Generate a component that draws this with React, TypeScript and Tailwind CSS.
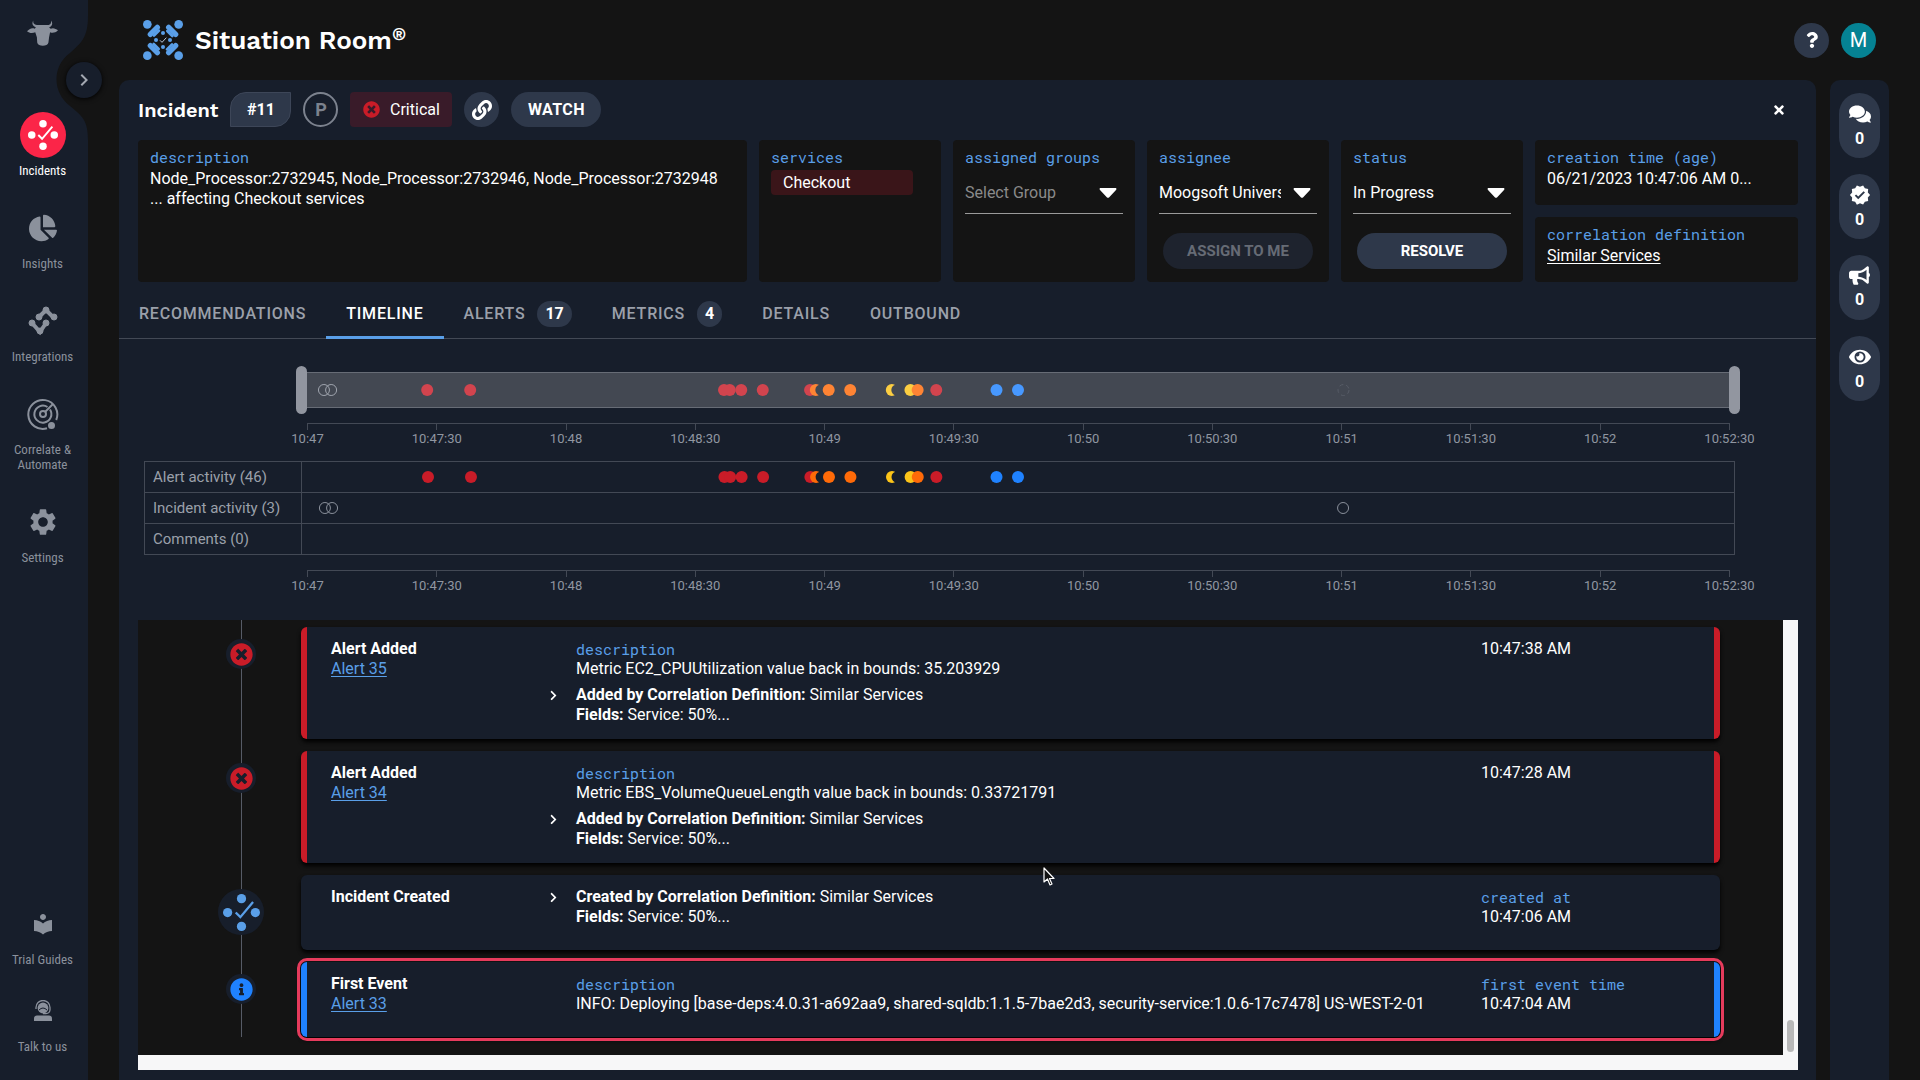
import type React from "react"
import {
  FaBullhorn,
  FaChartPie,
  FaChevronRight,
  FaComments,
  FaEye,
  FaInfoCircle,
  FaLink,
  FaQuestion,
  FaTimes,
  FaTimesCircle,
} from "react-icons/fa"
import { MdChevronRight, MdLocalLibrary, MdSettings, MdVerified } from "react-icons/md"

const CowLogo = () => (
  <svg viewBox="0 0 94 78" className="h-[26px] w-[31px] fill-[#8b919c]">
    <path d="M19 1C14 10 16 18 27 22L23 26C14 22 6 28 0 34C8 41 18 40 25 37L30 52L31 68C33 81 63 81 65 68L67 52L70 37C77 40 86 39 94 31C87 26 80 22 72 26L67 22C77 18 79 9 73 1C74 11 70 15 60 15L34 15C22 15 18 11 19 1Z" />
  </svg>
)

const RoomLogo = () => (
  <svg viewBox="0 0 120 120" className="size-10">
    {[0, 90, 180, 270].map((angle) => (
      <g key={angle} transform={`rotate(${angle} 60 60)`}>
        <circle cx="13" cy="13" r="13" fill="#5a9fe8" />
        <path d="M22 43L43 22" stroke="#5a9fe8" strokeWidth="16" strokeLinecap="round" />
        <path d="M33 47L48 32" stroke="#5a9fe8" strokeWidth="8" strokeLinecap="round" />
        <circle cx="60" cy="39" r="6" fill="#5a9fe8" />
      </g>
    ))}
    <path d="M51 61L57 67L70 53" fill="none" stroke="#b9c6da" strokeWidth="3" />
  </svg>
)

const CheckDots = ({ className }: { className: string }) => (
  <svg viewBox="0 0 32 32" className={className} fill="currentColor">
    <circle cx="16" cy="4" r="4" />
    <circle cx="4" cy="16" r="4" />
    <circle cx="28" cy="16" r="4" />
    <circle cx="16" cy="28" r="4" />
    <path d="M11 16L15 20L26 7" fill="none" stroke="currentColor" strokeWidth="2" />
  </svg>
)

const IntegrationsIcon = () => (
  <svg viewBox="0 0 32 32" className="size-8" fill="currentColor" stroke="currentColor">
    <path d="M5 18L13 27L19 18M12 12L19 5L26 12" fill="none" strokeWidth="4" />
    <circle cx="5" cy="18" r="3" />
    <circle cx="13" cy="26" r="3" />
    <circle cx="19" cy="18" r="3" />
    <circle cx="12" cy="12" r="3" />
    <circle cx="19" cy="5" r="3" />
    <circle cx="27" cy="12" r="3" />
  </svg>
)

const RadarIcon = () => (
  <svg viewBox="0 0 32 32" className="size-8" fill="none" stroke="currentColor" strokeWidth="2">
    <path d="M20 30.3A14.5 14.5 0 1 1 29.2 22" />
    <path d="M20.5 9A8.5 8.5 0 1 0 23 11.5" />
    <circle cx="16" cy="16" r="3" />
    <path d="M18 14L26 6" />
    <circle cx="24.500" cy="27.500" r="2.500" fill="currentColor" />
  </svg>
)

const AgentIcon = () => (
  <svg viewBox="0 0 20 22" className="h-[22px] w-5" fill="currentColor">
    <circle cx="10" cy="8" r="5.400" />
    <path d="M3 9V7.500A7 7 0 0 1 17 7.500V10A4 4 0 0 1 13 13.500H10" fill="none" stroke="currentColor" strokeWidth="1.300" />
    <path d="M6 10Q10 6 14 10" fill="none" stroke="#171e2b" strokeWidth="1" />
    <path d="M1 21V18.500Q1 15.500 4 15.500H16Q19 15.500 19 18.500V21Z" />
  </svg>
)

const NavItem = ({
  label,
  active,
  children,
}: { label: string; active?: boolean; children: React.ReactNode }) => (
  <a
    href="#"
    className={`flex w-[85px] flex-col items-center gap-1 text-center ${active ? "text-white" : "text-[#8b919c]"}`}
  >
    <span className="flex h-12 items-center">{children}</span>
    <span className="w-20 font-['Roboto_Condensed','Roboto',sans-serif] text-[13px] leading-[15px]">{label}</span>
  </a>
)

const FieldLabel = ({ children }: { children: React.ReactNode }) => (
  <div className="font-['Roboto_Mono','DejaVu_Sans_Mono',monospace] text-[15px] leading-5 text-[#5a9fe8]">
    {children}
  </div>
)

const Card = ({ label, children }: { label: string; children: React.ReactNode }) => (
  <div className="flex min-w-0 flex-1 flex-col gap-0.5 rounded bg-[#141414] px-3 pt-[7px]">
    <FieldLabel>{label}</FieldLabel>
    <div>{children}</div>
  </div>
)

const SelectField = ({ label, value, muted }: { label: string; value: string; muted?: boolean }) => (
  <div className="mt-[10px] flex h-[35px] items-center border-b border-[#9a9a9a] pr-[6px] pb-[6px]">
    <select
      aria-label={label}
      className={`min-w-0 flex-1 appearance-none overflow-hidden bg-transparent ${muted ? "text-[#8a8a8a]" : "text-white"}`}
    >
      <option>{value}</option>
    </select>
    <svg viewBox="0 0 18 10" className="pointer-events-none ml-3 h-[10px] w-[18px] fill-white">
      <path d="M1 0H17Q18 1 17 2L10 9.500Q9 10 8 9.500L1 2Q0 1 1 0Z" />
    </svg>
  </div>
)

const tabs = [
  { name: "RECOMMENDATIONS" },
  { name: "TIMELINE", active: true },
  { name: "ALERTS", count: 17 },
  { name: "METRICS", count: 4 },
  { name: "DETAILS" },
  { name: "OUTBOUND" },
]

const RED = "#c91c28"
const ORANGE = "#ff6a08"
const YELLOW = "#fcc419"
const BLUE = "#1f82ff"

// positions are percentages of the visible time span
const alertDots = [
  { at: 8.8, color: RED },
  { at: 11.8, color: RED },
  { at: 29.5, color: RED },
  { at: 29.9, color: RED },
  { at: 30.7, color: RED },
  { at: 32.2, color: RED },
  { at: 35.5, color: RED },
  { at: 35.9, color: ORANGE, crescent: true },
  { at: 36.8, color: ORANGE },
  { at: 38.3, color: ORANGE },
  { at: 41.2, color: YELLOW, crescent: true },
  { at: 42.5, color: YELLOW },
  { at: 43.0, color: ORANGE },
  { at: 44.3, color: RED },
  { at: 48.5, color: BLUE },
  { at: 50.0, color: BLUE },
]

const incidentDots = [1.6, 2.1, 72.7]

const ticks = [
  "10:47",
  "10:47:30",
  "10:48",
  "10:48:30",
  "10:49",
  "10:49:30",
  "10:50",
  "10:50:30",
  "10:51",
  "10:51:30",
  "10:52",
  "10:52:30",
]

const AlertDots = ({ back }: { back: string }) => (
  <>
    {alertDots.map((dot) => (
      <g key={dot.at}>
        <circle cx={`${dot.at}%`} cy="50%" r="6" fill={dot.color} />
        {dot.crescent && <circle cx={`${dot.at + 0.35}%`} cy="50%" r="5.500" fill={back} />}
      </g>
    ))}
  </>
)

const IncidentDots = ({ items }: { items: number[] }) => (
  <>
    {items.map((at) => (
      <circle key={at} cx={`${at}%`} cy="50%" r="5.500" fill="none" stroke="#8b919c" />
    ))}
  </>
)

const Axis = () => (
  <div className="mr-[68px] ml-[169px]">
    <div className="flex h-[7px] justify-between border-t border-[#434955]">
      {ticks.map((tick) => (
        <span key={tick} className="w-px bg-[#434955]" />
      ))}
    </div>
    <div className="mt-px flex justify-between text-[13px] leading-4 text-[#9096a1]">
      {ticks.map((tick) => (
        <span key={tick} className="flex w-px justify-center">
          <span>{tick}</span>
        </span>
      ))}
    </div>
  </div>
)

const activity = [
  { label: "Alert activity (46)", dots: <AlertDots back="#171e2b" /> },
  { label: "Incident activity (3)", dots: <IncidentDots items={incidentDots} /> },
  { label: "Comments (0)", dots: null },
]

type TimelineEvent = {
  title: string
  link?: string
  description?: string
  reason?: string
  timeLabel?: string
  time: string
  kind: "critical" | "created" | "info"
}

const events: TimelineEvent[] = [
  {
    title: "Alert Added",
    link: "Alert 35",
    description: "Metric EC2_CPUUtilization value back in bounds: 35.203929",
    reason: "Added by Correlation Definition:",
    time: "10:47:38 AM",
    kind: "critical",
  },
  {
    title: "Alert Added",
    link: "Alert 34",
    description: "Metric EBS_VolumeQueueLength value back in bounds: 0.33721791",
    reason: "Added by Correlation Definition:",
    time: "10:47:28 AM",
    kind: "critical",
  },
  {
    title: "Incident Created",
    reason: "Created by Correlation Definition:",
    timeLabel: "created at",
    time: "10:47:06 AM",
    kind: "created",
  },
  {
    title: "First Event",
    link: "Alert 33",
    description:
      "INFO: Deploying [base-deps:4.0.31-a692aa9, shared-sqldb:1.1.5-7bae2d3, security-service:1.0.6-17c7478] US-WEST-2-01",
    timeLabel: "first event time",
    time: "10:47:04 AM",
    kind: "info",
  },
]

const edge = {
  critical: "border-x-[6px] border-[#c91c28] px-6",
  created: "px-[30px]",
  info: "border-x-[6px] border-[#1f82ff] px-6 outline-3 outline-offset-1 outline-[#e63b5c]",
}

const EventRow = ({ event }: { event: TimelineEvent }) => (
  <li className="group flex pb-3 last:pb-0">
    <div className="relative mr-[37px] ml-20 -mb-3 flex w-[46px] justify-center group-last:mb-0">
      <div className="absolute -top-[7px] bottom-0 left-[23px] w-px bg-[#565b66]" />
      {event.kind === "created" ? (
        <span className="relative mt-[14px] flex size-[46px] items-center justify-center rounded-full bg-[#171e2b] text-[#5a9fe8]">
          <CheckDots className="size-[37px]" />
        </span>
      ) : (
        <span className="relative mt-3 flex size-[30px] items-center justify-center rounded-full bg-[#171e2b]">
          {event.kind === "critical" ? (
            <FaTimesCircle className="size-[23px] text-[#c91c28]" />
          ) : (
            <FaInfoCircle className="size-[23px] text-[#1f82ff]" />
          )}
        </span>
      )}
    </div>
    <div
      className={`mr-[63px] flex min-h-[75px] flex-1 rounded-md bg-[#171e2b] pt-3 pb-[14px] shadow-[0_3px_4px_#000] ${edge[event.kind]}`}
    >
      <div className="w-[213px]">
        <div className="font-bold">{event.title}</div>
        {event.link && (
          <a href="#" className="text-[#5a9fe8] underline underline-offset-2">
            {event.link}
          </a>
        )}
      </div>
      <div className="flex-1">
        {event.description && (
          <div className="pl-8">
            <FieldLabel>description</FieldLabel>
            <div>{event.description}</div>
          </div>
        )}
        {event.reason && (
          <div className={`flex ${event.description ? "mt-[6px]" : ""}`}>
            <button aria-label="Expand" className="flex h-5 w-8 items-center pl-1">
              <FaChevronRight className="size-[11px]" />
            </button>
            <div>
              <div>
                <b>{event.reason}</b> Similar Services
              </div>
              <div>
                <b>Fields:</b> Service: 50%...
              </div>
            </div>
          </div>
        )}
      </div>
      <div className="w-[209px]">
        {event.timeLabel && <FieldLabel>{event.timeLabel}</FieldLabel>}
        <div>{event.time}</div>
      </div>
    </div>
  </li>
)

const railItems = [
  { name: "Comments", icon: <FaComments className="size-[22px]" /> },
  { name: "Verified", icon: <MdVerified className="size-[22px]" /> },
  { name: "Announcements", icon: <FaBullhorn className="size-[21px]" /> },
  { name: "Watchers", icon: <FaEye className="size-[22px]" /> },
]

export default function App() {
  return (
    <div className="flex min-h-screen bg-[#141414] font-['Roboto',sans-serif] text-base leading-5 text-white">
      <nav className="relative flex w-[88px] shrink-0 flex-col items-center bg-[#171e2b] pt-5 pr-[3px] pb-[26px]">
        <CowLogo />
        <svg viewBox="0 0 34 124" className="absolute top-4 right-0 h-[124px] w-[34px] fill-[#141414]">
          <path d="M34 0C34 22 27 27 16 37C-2 50 -2 76 16 90C28 100 34 104 34 124Z" />
        </svg>
        <button
          aria-label="Expand menu"
          className="absolute top-[62px] left-[66px] flex size-9 items-center justify-center rounded-full bg-[#171e2b] shadow-[0_1px_5px_#000]"
        >
          <MdChevronRight className="size-6 text-[#a3a8b1]" />
        </button>
        <div className="mt-[65px] flex flex-1 flex-col gap-[26px]">
          <NavItem label="Incidents" active>
            <span className="flex size-[46px] items-center justify-center rounded-full bg-[#fb2548]">
              <CheckDots className="size-[30px]" />
            </span>
          </NavItem>
          <NavItem label="Insights">
            <FaChartPie className="size-7" />
          </NavItem>
          <NavItem label="Integrations">
            <IntegrationsIcon />
          </NavItem>
          <NavItem label="Correlate & Automate">
            <RadarIcon />
          </NavItem>
          <NavItem label="Settings">
            <MdSettings className="size-8" />
          </NavItem>
        </div>
        <div className="flex flex-col gap-5">
          <NavItem label="Trial Guides">
            <MdLocalLibrary className="size-6" />
          </NavItem>
          <NavItem label="Talk to us">
            <AgentIcon />
          </NavItem>
        </div>
      </nav>

      <div className="flex min-w-0 flex-1 flex-col pr-[31px] pl-[31px]">
        <header className="flex h-20 items-center pr-[13px] pl-6">
          <RoomLogo />
          <h1 className="ml-3 font-['Work_Sans','Open_Sans',sans-serif] text-[26px] leading-8 font-semibold">
            Situation Room<sup className="text-lg">®</sup>
          </h1>
          <button
            aria-label="Help"
            className="ml-auto flex size-[35px] items-center justify-center rounded-full bg-[#2e384a]"
          >
            <FaQuestion className="size-4" />
          </button>
          <button className="ml-3 size-[35px] rounded-full bg-[#058293] text-xl">M</button>
        </header>

        <div className="flex flex-1 gap-[14px]">
          <main className="min-w-0 flex-1 rounded-t-[10px] bg-[#171e2b] pt-3 pb-[10px]">
            <div className="flex h-[35px] items-center gap-3 pr-[26px] pl-[19px]">
              <h2 className="font-['Work_Sans','Open_Sans',sans-serif] text-xl leading-5 font-semibold">Incident</h2>
              <span className="flex h-[35px] w-[61px] items-center justify-center rounded-tl-2xl rounded-br-2xl border border-[#3d4658] bg-[#2e384a] font-bold">
                #11
              </span>
              <span className="flex size-[35px] items-center justify-center rounded-full border-2 border-[#7c828e] text-lg font-bold text-[#7c828e]">
                P
              </span>
              <span className="flex h-[35px] w-[102px] items-center justify-center gap-[10px] rounded bg-[#391b29]">
                <FaTimesCircle className="size-[17px] text-[#c91c28]" />
                Critical
              </span>
              <button
                aria-label="Copy link"
                className="flex size-[35px] items-center justify-center rounded-full bg-[#2e384a]"
              >
                <FaLink className="size-5" />
              </button>
              <button className="h-[35px] w-[90px] rounded-full bg-[#2e384a] font-bold tracking-wide">WATCH</button>
              <button aria-label="Close" className="ml-auto p-1">
                <FaTimes className="size-[14px]" />
              </button>
            </div>

            <div className="mt-[13px] mr-[18px] ml-[19px] flex min-h-[142px] gap-3">
              <Card label="description">
                Node_Processor:2732945, Node_Processor:2732946, Node_Processor:2732948
                <br />
                ... affecting Checkout services
              </Card>
              <div className="flex w-[182px]">
                <Card label="services">
                  <div className="mt-px mr-4 rounded bg-[#3a1519] px-3 py-[3px] leading-[19px]">Checkout</div>
                </Card>
              </div>
              <div className="flex w-[182px]">
                <Card label="assigned groups">
                  <SelectField label="assigned groups" value="Select Group" muted />
                </Card>
              </div>
              <div className="flex w-[182px]">
                <Card label="assignee">
                  <SelectField label="assignee" value="Moogsoft University" />
                  <button
                    disabled
                    className="mx-auto mt-[19px] block h-9 w-[150px] rounded-full bg-[#1e232e] text-[15px] font-bold text-[#666b75]"
                  >
                    ASSIGN TO ME
                  </button>
                </Card>
              </div>
              <div className="flex w-[182px]">
                <Card label="status">
                  <SelectField label="status" value="In Progress" />
                  <button className="mx-auto mt-[19px] block h-9 w-[150px] rounded-full bg-[#2e384a] text-[15px] font-bold">
                    RESOLVE
                  </button>
                </Card>
              </div>
              <div className="flex w-[263px] flex-col gap-3">
                <Card label="creation time (age)">06/21/2023 10:47:06 AM 0...</Card>
                <Card label="correlation definition">
                  <a href="#" className="underline underline-offset-2">
                    Similar Services
                  </a>
                </Card>
              </div>
            </div>

            <div role="tablist" className="mt-[5px] flex h-[52px] border-b border-[#434955] font-medium">
              {tabs.map((tab) => (
                <button
                  key={tab.name}
                  role="tab"
                  className={`-mb-px flex items-center gap-3 border-b-3 px-5 pt-1 tracking-wider ${tab.active ? "border-[#5a9fe8] text-white" : "border-transparent text-[#9ba0aa]"}`}
                >
                  {tab.name}
                  {tab.count && (
                    <span className="flex h-[26px] items-center rounded-full bg-[#2e384a] px-2 font-bold tracking-normal text-white">
                      {tab.count}
                    </span>
                  )}
                </button>
              ))}
            </div>

            <div className="mr-[18px] ml-[19px] pt-[27px]">
              <div className="mr-[58px] ml-[158px] flex h-12 items-center">
                <span className="z-10 -mr-[6px] h-12 w-[11px] rounded-full bg-[#9296a0]" />
                <svg className="h-9 flex-1 border-y border-[#676c76] bg-[#1a202d]">
                  <AlertDots back="#1a202d" />
                  <IncidentDots items={incidentDots.slice(0, 2)} />
                  <rect width="100%" height="100%" fill="#fff" opacity="0.18" />
                  <circle cx="72.700%" cy="50%" r="5.500" fill="none" stroke="#575c67" strokeDasharray="4 3" />
                </svg>
                <span className="z-10 -ml-[6px] h-12 w-[11px] rounded-full bg-[#9296a0]" />
              </div>
              <div className="mt-[9px]">
                <Axis />
              </div>

              <div className="mt-[14px] mr-[63px] ml-[6px]">
                <table className="w-full border-collapse text-[#9ba0aa]">
                  <tbody>
                    {activity.map((row) => (
                      <tr key={row.label} className="h-[31px] border border-[#434955]">
                        <th className="w-[157px] border-r border-[#434955] pl-2 text-left text-[15px] font-normal">
                          {row.label}
                        </th>
                        <td className="p-0">
                          <svg className="block h-[30px] w-full">{row.dots}</svg>
                        </td>
                      </tr>
                    ))}
                  </tbody>
                </table>
              </div>
              <div className="mt-[15px]">
                <Axis />
              </div>

              <div className="mt-[26px] flex border-b-[15px] border-[#f7f7f8] bg-[#141414]">
                <ul className="min-w-0 flex-1 overflow-hidden pt-[7px] pb-[18px]">
                  {events.map((event) => (
                    <EventRow key={event.time} event={event} />
                  ))}
                </ul>
                <div className="flex w-[15px] flex-col justify-end bg-[#f7f7f8] px-1 pb-[3px]">
                  <span className="h-8 rounded-full bg-[#b8b8b8]" />
                </div>
              </div>
            </div>
          </main>

          <aside className="flex w-[59px] flex-col items-center gap-4 rounded-t-[10px] bg-[#171e2b] pt-[13px]">
            {railItems.map((item) => (
              <button
                key={item.name}
                aria-label={item.name}
                className="flex h-[65px] w-[41px] flex-col items-center justify-center gap-1 rounded-full bg-[#2e384a] font-bold"
              >
                {item.icon}
                <span>0</span>
              </button>
            ))}
          </aside>
        </div>
      </div>

      <svg viewBox="0 0 12 20" className="pointer-events-none absolute top-[867px] left-[1043px] h-5 w-3">
        <path
          d="M1 1V15L4.500 12L7 18L9 17L6.500 11.500H11Z"
          fill="#111"
          stroke="#fff"
          strokeWidth="1.200"
          strokeLinejoin="round"
        />
      </svg>
    </div>
  )
}
